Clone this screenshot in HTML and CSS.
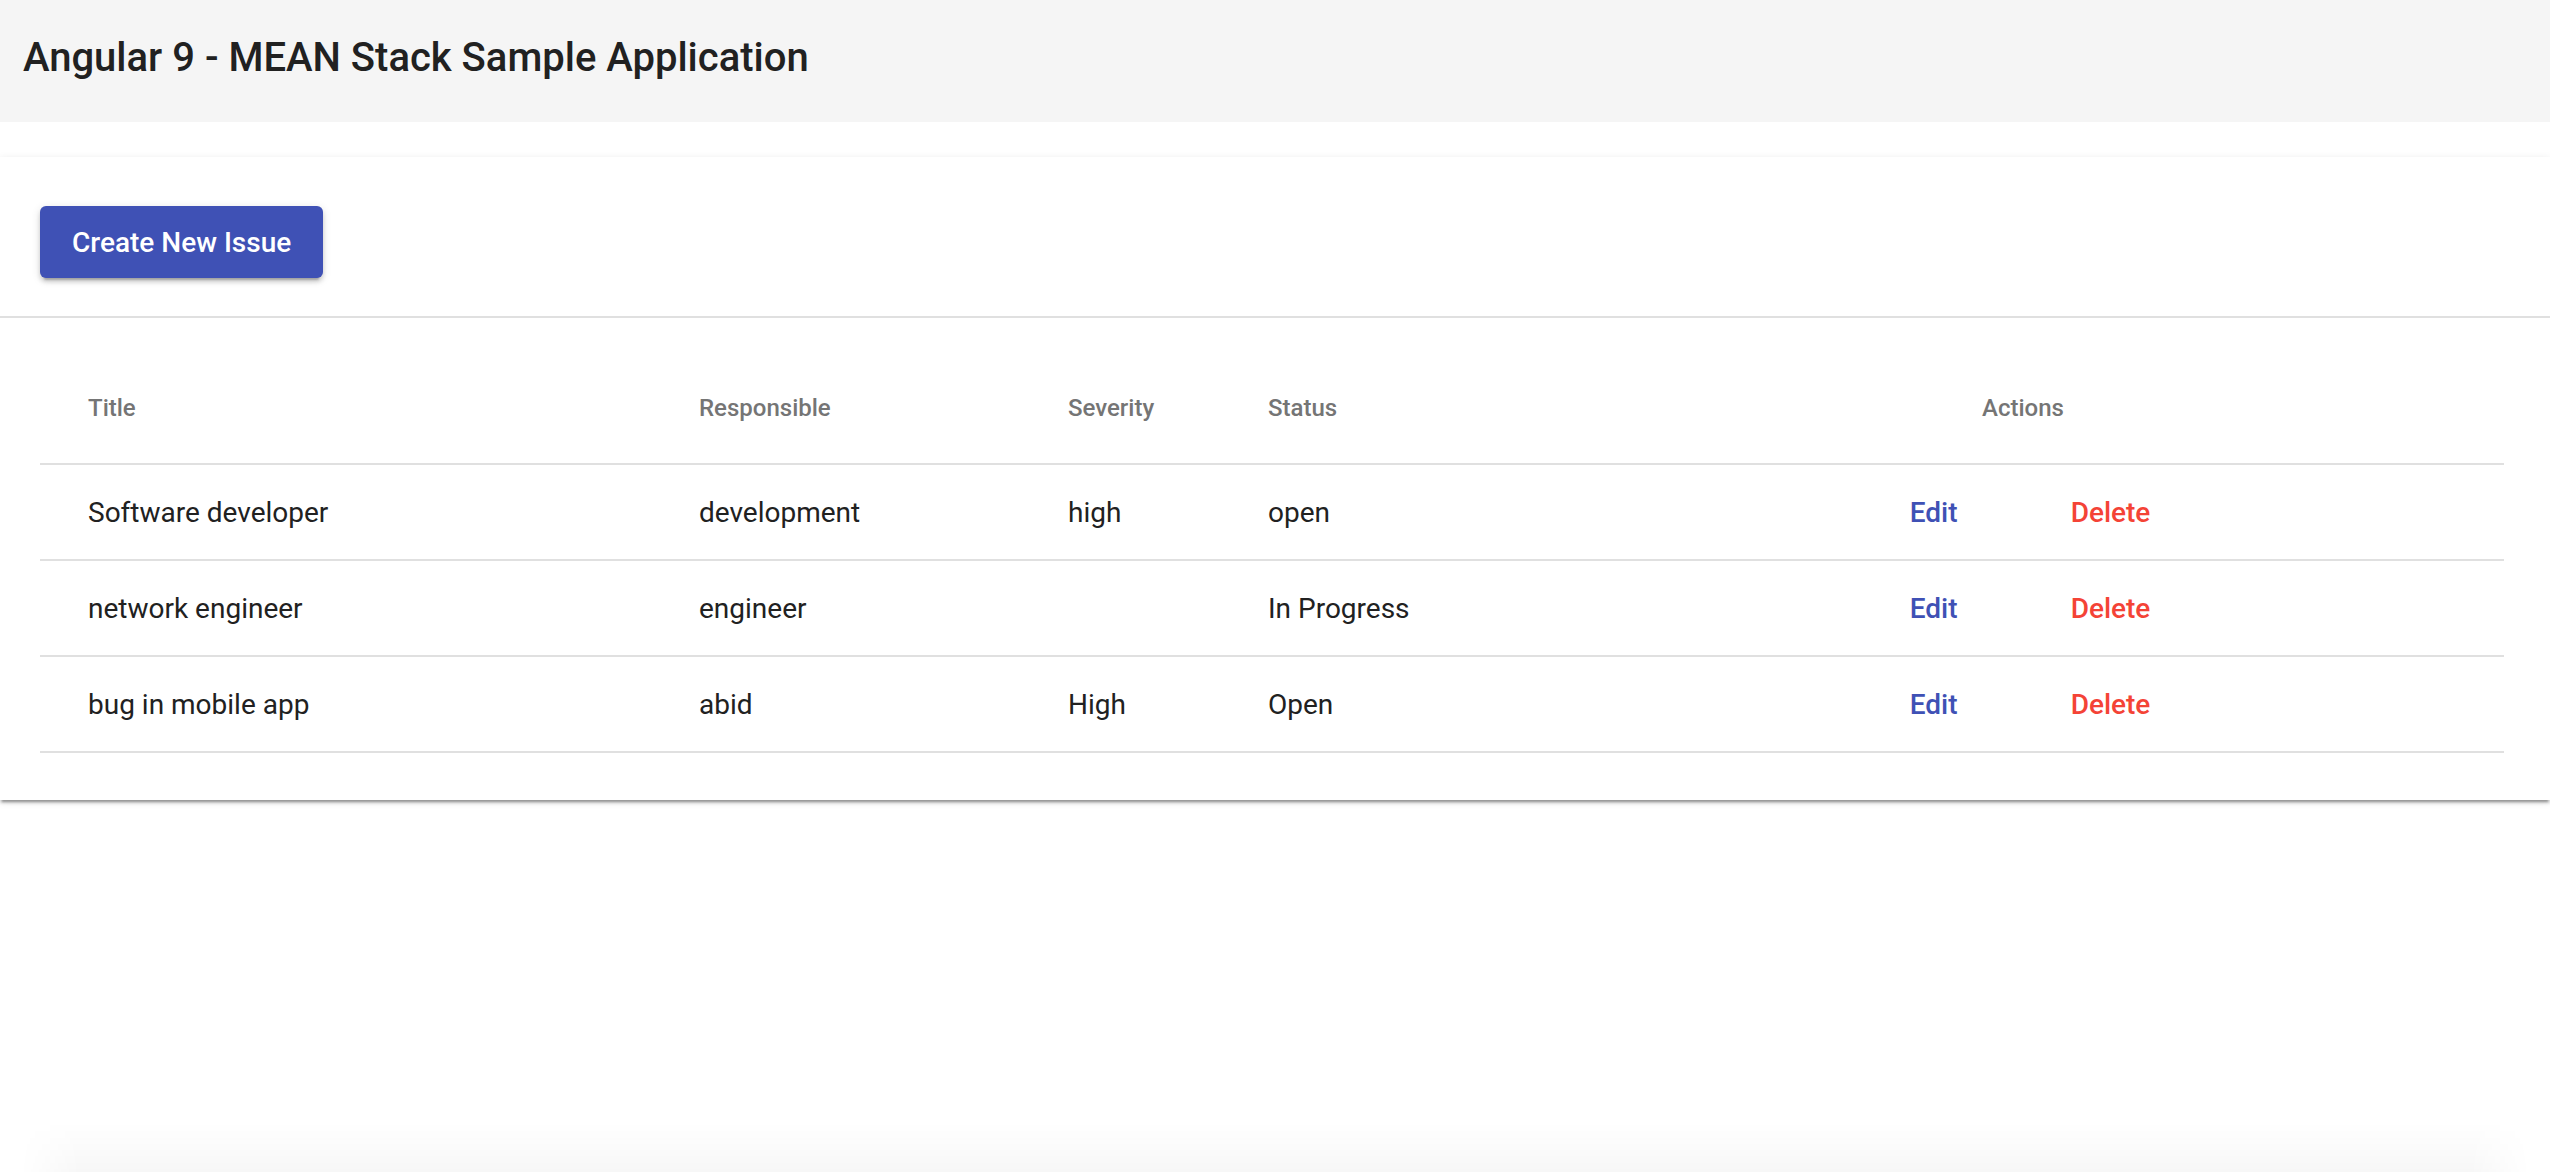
FILE: index.html
```html
<!DOCTYPE html>
<html lang="en">
<head>
<meta charset="utf-8">
<title>Angular 9 - MEAN Stack Sample Application</title>
<link rel="stylesheet" href="styles.css">
</head>
<body>
<header class="toolbar">
  <span class="toolbar-title">Angular 9 - MEAN Stack Sample Application</span>
</header>
<main class="content">
  <section class="card">
    <div class="card-actions">
      <button class="btn-raised">Create New Issue</button>
    </div>
    <div class="divider"></div>
    <div class="table-wrap">
      <table class="issues">
        <thead>
          <tr>
            <th class="col-title">Title</th>
            <th class="col-resp">Responsible</th>
            <th class="col-sev">Severity</th>
            <th class="col-status">Status</th>
            <th class="col-actions">Actions</th>
            <th class="col-rest"></th>
          </tr>
        </thead>
        <tbody>
          <tr>
            <td class="col-title">Software developer</td>
            <td>development</td>
            <td>high</td>
            <td>open</td>
            <td class="col-actions"><div class="actions"><button class="btn-flat btn-edit">Edit</button><button class="btn-flat btn-delete">Delete</button></div></td>
            <td></td>
          </tr>
          <tr>
            <td class="col-title">network engineer</td>
            <td>engineer</td>
            <td></td>
            <td>In Progress</td>
            <td class="col-actions"><div class="actions"><button class="btn-flat btn-edit">Edit</button><button class="btn-flat btn-delete">Delete</button></div></td>
            <td></td>
          </tr>
          <tr>
            <td class="col-title">bug in mobile app</td>
            <td>abid</td>
            <td>High</td>
            <td>Open</td>
            <td class="col-actions"><div class="actions"><button class="btn-flat btn-edit">Edit</button><button class="btn-flat btn-delete">Delete</button></div></td>
            <td></td>
          </tr>
        </tbody>
      </table>
    </div>
  </section>
  <div class="next-card"></div>
</main>
</body>
</html>
```
FILE: styles.css
```css
html, body {
  margin: 0;
  padding: 0;
  background: #ffffff;
  font-family: Roboto, "Helvetica Neue", Arial, sans-serif;
  color: rgba(0, 0, 0, 0.87);
  overflow: hidden;
}

.toolbar {
  height: 122px;
  background: #f5f5f5;
  display: flex;
  align-items: center;
  padding-left: 23px;
  box-sizing: border-box;
}

.toolbar-title {
  font-size: 40px;
  font-weight: 500;
  color: #212121;
  line-height: 1;
  position: relative;
  top: -3px;
}

.content {
  padding-top: 35px;
}

.card {
  background: #fff;
  box-shadow: 0 4px 2px -2px rgba(0, 0, 0, 0.25), 0 3px 3px 0 rgba(0, 0, 0, 0.16), 0 2px 8px 0 rgba(0, 0, 0, 0.1);
  padding-bottom: 47px;
}

.card-actions {
  padding: 49px 40px 38px;
  display: flex;
}

.btn-raised {
  height: 72px;
  padding: 0 32px;
  border: none;
  border-radius: 6px;
  background: #3f51b5;
  color: #fff;
  font-family: Roboto, Arial, sans-serif;
  font-size: 28px;
  font-weight: 500;
  box-shadow: 0 6px 2px -4px rgba(0, 0, 0, 0.2), 0 4px 4px 0 rgba(0, 0, 0, 0.14), 0 2px 10px 0 rgba(0, 0, 0, 0.12);
  cursor: pointer;
}

.divider {
  height: 2px;
  background: #e0e0e0;
}

.table-wrap {
  padding: 35px 46px 0 40px;
}

.issues {
  width: 100%;
  border-collapse: collapse;
  table-layout: fixed;
}

.issues th,
.issues td {
  text-align: left;
  padding: 0;
  border-bottom: 2px solid #e0e0e0;
}

.issues th {
  height: 110px;
  font-size: 24px;
  font-weight: 500;
  color: #757575;
}

.issues td {
  height: 94px;
  font-size: 28px;
  font-weight: 400;
  color: #212121;
}

.issues .col-title { width: 611px; padding-left: 48px; }
.issues .col-resp { width: 369px; }
.issues .col-sev { width: 200px; }
.issues .col-status { width: 532px; }
.issues .col-actions { width: 446px; text-align: center; }

.actions {
  display: flex;
  justify-content: center;
  gap: 41px;
  padding-left: 6px;
}

.btn-flat {
  height: 72px;
  min-width: 128px;
  padding: 0 32px;
  border: none;
  background: transparent;
  font-family: Roboto, Arial, sans-serif;
  font-size: 28px;
  font-weight: 500;
  cursor: pointer;
}

.btn-edit { color: #3f51b5; }
.btn-delete { color: #f44336; }

.next-card {
  height: 50px;
  margin: 322px 20px 0;
  background: linear-gradient(to bottom, rgba(0, 0, 0, 0), rgba(0, 0, 0, 0.03));
  -webkit-mask-image: linear-gradient(to right, transparent 0, #000 60px, #000 calc(100% - 60px), transparent 100%);
  mask-image: linear-gradient(to right, transparent 0, #000 60px, #000 calc(100% - 60px), transparent 100%);
}
```
